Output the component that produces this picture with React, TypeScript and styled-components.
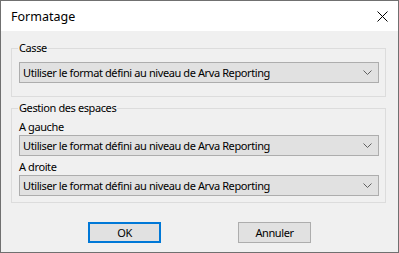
import React from "react";
import styled, { createGlobalStyle } from "styled-components";

const GlobalStyle = createGlobalStyle`
  html, body {
    margin: 0;
    padding: 0;
    background: #ffffff;
  }
  body {
    font-family: "Noto Sans", "Liberation Sans", sans-serif;
    font-size: 11px;
  }
`;

// Dialog frame.
const Window = styled.div`
  box-sizing: border-box;
  width: 399px;
  height: 253px;
  border: 1px solid #707070;
  background: #f0f0f0;
  display: flex;
  flex-direction: column;
  color: #000;
`;

// Title bar.
const TitleBar = styled.div`
  height: 30px;
  background: #ffffff;
  display: flex;
  align-items: center;
  justify-content: space-between;
  padding: 0 10px 0 10px;
`;

const Title = styled.span`
  font-size: 12.5px;
`;

const CloseButton = styled.div`
  width: 12px;
  height: 12px;
  display: flex;
  align-items: center;
  justify-content: center;
`;

// Dialog content.
const Body = styled.div`
  flex: 1;
  display: flex;
  flex-direction: column;
  padding: 10px 12px 0 10px;
  letter-spacing: -0.4px;
`;

const Group = styled.fieldset<{ $gap?: number; $top?: number; $bottom?: number }>`
  margin: 0 0 ${(p) => p.$gap ?? 0}px 0;
  padding: ${(p) => p.$top ?? 1}px 6px ${(p) => p.$bottom ?? 6}px 7px;
  border: 1px solid #dcdcdc;
  min-width: 0;
  display: flex;
  flex-direction: column;
`;

const Legend = styled.legend`
  padding: 0 1px;
  margin-left: -1px;
  line-height: 14px;
`;

const FieldLabel = styled.div`
  line-height: 10px;
  margin: 6px 0 3px 0;
`;

const Combo = styled.div`
  height: 21px;
  box-sizing: border-box;
  border: 1px solid #adadad;
  background: #e1e1e1;
  display: flex;
  align-items: center;
  justify-content: space-between;
  padding: 0 6px 0 3px;
`;

const ComboText = styled.span`
  white-space: nowrap;
`;

const ButtonRow = styled.div`
  display: flex;
  gap: 77px;
  padding-left: 77px;
  margin-top: 19px;
`;

const Button = styled.div<{ $primary?: boolean }>`
  box-sizing: border-box;
  width: 73px;
  height: 21px;
  display: flex;
  align-items: center;
  justify-content: center;
  background: #e1e1e1;
  border: ${(p) => (p.$primary ? "2px solid #0078d7" : "1px solid #adadad")};
`;

const Chevron = () => (
  <svg width="9" height="5" viewBox="0 0 9 5">
    <path d="M0.5 0.5 L4.5 4.5 L8.5 0.5" fill="none" stroke="#606060" strokeWidth="1" />
  </svg>
);

const CloseIcon = () => (
  <svg width="11" height="11" viewBox="0 0 11 11">
    <path d="M0.5 0.5 L10.5 10.5 M10.5 0.5 L0.5 10.5" stroke="#000" strokeWidth="1" />
  </svg>
);

const DEFAULT = "Utiliser le format défini au niveau de Arva Reporting";

const Select = ({ value }: { value: string }) => (
  <Combo>
    <ComboText>{value}</ComboText>
    <Chevron />
  </Combo>
);

const App = () => {
  return (
    <>
      <GlobalStyle />
      <Window>
        <TitleBar>
          <Title>Formatage</Title>
          <CloseButton>
            <CloseIcon />
          </CloseButton>
        </TitleBar>
        <Body>
          <Group $gap={4} $top={7} $bottom={13}>
            <Legend>Casse</Legend>
            <Select value={DEFAULT} />
          </Group>
          <Group $bottom={6}>
            <Legend>Gestion des espaces</Legend>
            <FieldLabel>A gauche</FieldLabel>
            <Select value={DEFAULT} />
            <FieldLabel>A droite</FieldLabel>
            <Select value={DEFAULT} />
          </Group>
          <ButtonRow>
            <Button $primary>OK</Button>
            <Button>Annuler</Button>
          </ButtonRow>
        </Body>
      </Window>
    </>
  );
};

export default App;
